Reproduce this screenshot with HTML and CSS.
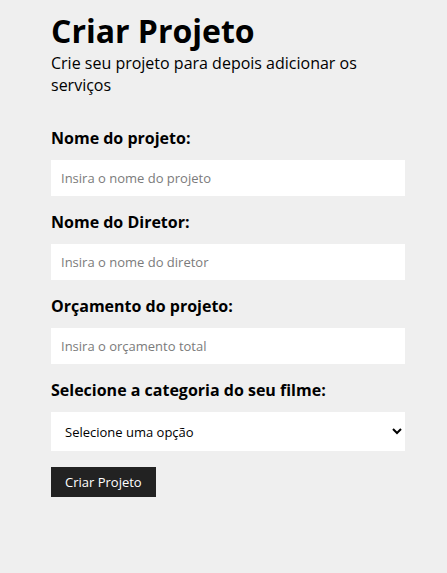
FILE: index.html
```html
<!DOCTYPE html>
<html lang="pt-BR">
<head>
<meta charset="utf-8">
<title>Criar Projeto</title>
<link rel="stylesheet" href="styles.css">
</head>
<body>
<div class="page">
  <h1 class="title">Criar Projeto</h1>
  <p class="subtitle">Crie seu projeto para depois adicionar os serviços</p>
  <form class="form">
    <div class="field">
      <label class="label" for="name">Nome do projeto:</label>
      <input class="input" id="name" type="text" placeholder="Insira o nome do projeto">
    </div>
    <div class="field">
      <label class="label" for="director">Nome do Diretor:</label>
      <input class="input" id="director" type="text" placeholder="Insira o nome do diretor">
    </div>
    <div class="field">
      <label class="label" for="budget">Orçamento do projeto:</label>
      <input class="input" id="budget" type="text" placeholder="Insira o orçamento total">
    </div>
    <div class="field">
      <label class="label" for="category">Selecione a categoria do seu filme:</label>
      <select class="select" id="category">
        <option>Selecione uma opção</option>
      </select>
    </div>
    <button class="btn" type="button">Criar Projeto</button>
  </form>
</div>
</body>
</html>
```
FILE: styles.css
```css
* { box-sizing: border-box; }
html, body {
  margin: 0;
  padding: 0;
  background: #efefef;
  font-family: "Open Sans", "Liberation Sans", sans-serif;
  color: #000;
}
.page {
  width: 354px;
  margin: 0 0 0 51px;
  padding-top: 9px;
}
.title {
  margin: 0;
  font-size: 32px;
  font-weight: 700;
  line-height: 43px;
}
.subtitle {
  margin: 0 0 31px;
  font-size: 16px;
  line-height: 22px;
}
.form {
  display: flex;
  flex-direction: column;
}
.field {
  display: flex;
  flex-direction: column;
  margin-bottom: 15px;
}
.field:last-of-type { margin-bottom: 16px; }
.label {
  font-size: 16px;
  font-weight: 700;
  line-height: 22px;
  margin-bottom: 11px;
}
.input {
  height: 36px;
  border: none;
  padding: 0 10px;
  font-family: "Open Sans", "Liberation Sans", sans-serif;
  font-size: 13px;
  background: #fff;
  outline: none;
}
.input::placeholder { color: #7b7b7b; }
.select {
  height: 39px;
  border: none;
  padding: 0 10px;
  font-family: "Open Sans", "Liberation Sans", sans-serif;
  font-size: 13px;
  background: #fff;
  color: #000;
  outline: none;
}
.btn {
  align-self: flex-start;
  height: 30px;
  padding: 0 14px;
  border: none;
  background: #222;
  color: #fff;
  font-family: "Open Sans", "Liberation Sans", sans-serif;
  font-size: 13px;
  cursor: pointer;
}
```
